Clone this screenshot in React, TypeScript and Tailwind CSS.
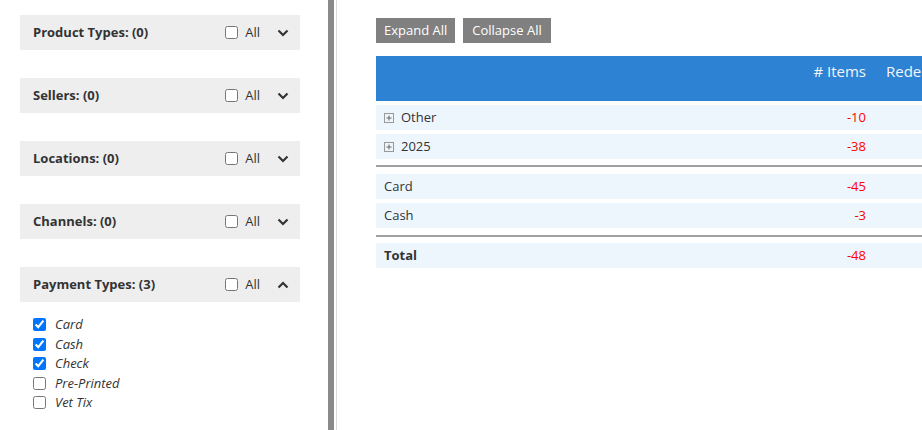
import React from "react";

const Chevron = ({ up }: { up?: boolean }) => (
  <svg width="12" height="8" viewBox="0 0 12 8" className="block">
    {up ? (
      <path d="M1.5 6.5 L6 2 L10.5 6.5" fill="none" stroke="#333" strokeWidth="2.2" />
    ) : (
      <path d="M1.5 1.5 L6 6 L10.5 1.5" fill="none" stroke="#333" strokeWidth="2.2" />
    )}
  </svg>
);

const PlusBox = () => (
  <svg width="10" height="10" viewBox="0 0 10 10" className="block">
    <rect x="0.5" y="0.5" width="9" height="9" fill="none" stroke="#999" strokeWidth="1" />
    <path d="M2.5 5 H7.5 M5 2.5 V7.5" stroke="#666" strokeWidth="1" />
  </svg>
);

const FilterHeader = ({ label, up }: { label: string; up?: boolean }) => (
  <div className="flex h-[35px] items-center bg-[#eeeeee] pl-[13px] pr-[11px]">
    <span className="flex-1 text-[13px] font-bold text-[#333]">{label}</span>
    <label className="flex items-center gap-[7px] text-[13px] text-[#333]">
      <input type="checkbox" className="m-0 h-[13px] w-[13px]" />
      <span>All</span>
    </label>
    <span className="ml-[17px] flex items-center">
      <Chevron up={up} />
    </span>
  </div>
);

const Row = ({ label, value, icon, bold }: { label: string; value: string; icon?: boolean; bold?: boolean }) => (
  <div className="flex h-[25px] items-center bg-[#eef6fd] text-[13px]">
    <div className={`flex w-[410px] shrink-0 items-center gap-[7px] pl-[8px] text-[#333] ${bold ? "font-bold" : ""}`}>
      {icon && <PlusBox />}
      <span>{label}</span>
    </div>
    <div className="w-[80px] shrink-0 text-right text-[#f00]">{value}</div>
    <div className="w-[120px] shrink-0"></div>
  </div>
);

export default function App() {
  return (
    <div className="flex h-[430px] w-[922px] overflow-hidden bg-white" style={{ fontFamily: '"Open Sans", sans-serif' }}>
      <div className="w-[328px] shrink-0 pl-[20px] pr-[28px] pt-[15px]">
        <div className="flex flex-col gap-[28px]">
          <FilterHeader label="Product Types: (0)" />
          <FilterHeader label="Sellers: (0)" />
          <FilterHeader label="Locations: (0)" />
          <FilterHeader label="Channels: (0)" />
          <div>
            <FilterHeader label="Payment Types: (3)" up />
            <div className="flex flex-col pl-[13px] pt-[13px] text-[13px] italic text-[#333]">
              {[
                ["Card", true],
                ["Cash", true],
                ["Check", true],
                ["Pre-Printed", false],
                ["Vet Tix", false],
              ].map(([l, c]) => (
                <label key={l as string} className="flex h-[19.5px] items-center gap-[9px]">
                  <input type="checkbox" defaultChecked={c as boolean} className="m-0 h-[13px] w-[13px]" />
                  <span>{l as string}</span>
                </label>
              ))}
            </div>
          </div>
        </div>
      </div>
      <div className="h-full w-[6px] shrink-0 bg-[#8a8a8a]"></div>
      <div className="ml-[2px] h-full w-px shrink-0 bg-[#dcdcdc]"></div>
      <div className="min-w-0 flex-1 overflow-hidden pl-[39px] pt-[18px]">
        <div className="flex gap-[8px]">
          <button className="h-[25px] bg-[#808080] px-[8px] text-[13px] text-white">Expand All</button>
          <button className="h-[25px] bg-[#808080] px-[9px] text-[13px] text-white">Collapse All</button>
        </div>
        <div className="mt-[13px] w-[700px]">
          <div className="flex h-[45px] bg-[#2d82d3] pt-[4px] text-[15px] text-[#f2f6fb]">
            <div className="w-[410px] shrink-0"></div>
            <div className="w-[80px] shrink-0 text-right"># Items</div>
            <div className="shrink-0 whitespace-nowrap pl-[20px]">Redemptions</div>
          </div>
          <div className="mt-[4px] flex flex-col gap-[4px]">
            <Row label="Other" value="-10" icon />
            <Row label="2025" value="-38" icon />
          </div>
          <div className="mt-[6px] h-[2px] bg-[#a0a0a0]"></div>
          <div className="mt-[7px] flex flex-col gap-[4px]">
            <Row label="Card" value="-45" />
            <Row label="Cash" value="-3" />
          </div>
          <div className="mt-[7px] h-[2px] bg-[#a0a0a0]"></div>
          <div className="mt-[6px]">
            <Row label="Total" value="-48" bold />
          </div>
        </div>
      </div>
    </div>
  );
}
